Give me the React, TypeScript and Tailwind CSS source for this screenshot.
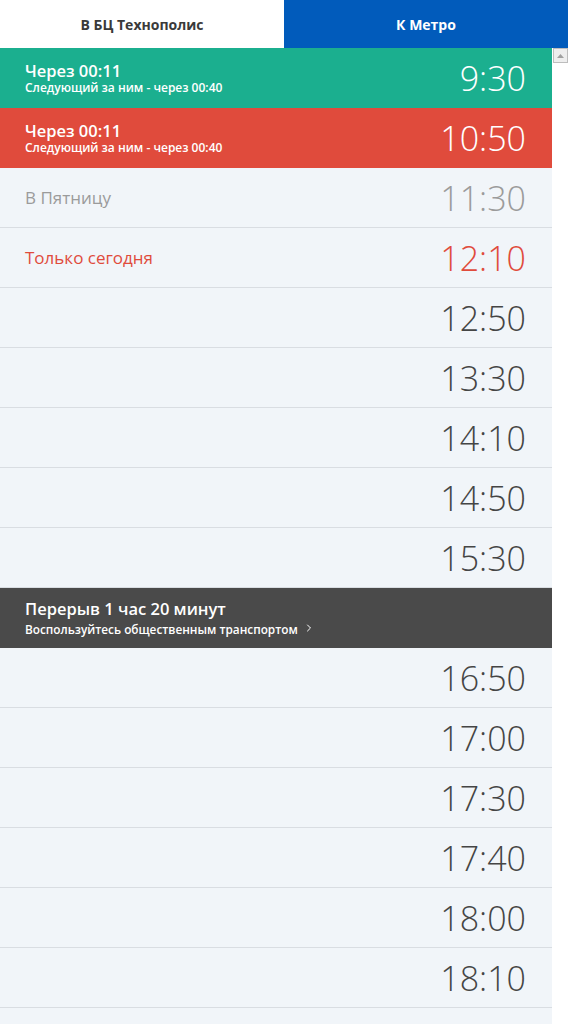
import { ChevronRight } from 'lucide-react'

type Row =
  | { kind: 'next'; tone: 'green' | 'red'; time: string }
  | { kind: 'time'; time: string; label?: string; tone?: 'gray' | 'red' }
  | { kind: 'break' }

const rows: Row[] = [
  { kind: 'next', tone: 'green', time: '9:30' },
  { kind: 'next', tone: 'red', time: '10:50' },
  { kind: 'time', time: '11:30', label: 'В Пятницу', tone: 'gray' },
  { kind: 'time', time: '12:10', label: 'Только сегодня', tone: 'red' },
  { kind: 'time', time: '12:50' },
  { kind: 'time', time: '13:30' },
  { kind: 'time', time: '14:10' },
  { kind: 'time', time: '14:50' },
  { kind: 'time', time: '15:30' },
  { kind: 'break' },
  { kind: 'time', time: '16:50' },
  { kind: 'time', time: '17:00' },
  { kind: 'time', time: '17:30' },
  { kind: 'time', time: '17:40' },
  { kind: 'time', time: '18:00' },
  { kind: 'time', time: '18:10' },
  { kind: 'time', time: '' },
]

const font = { fontFamily: '"Open Sans", Roboto, sans-serif' }

export default function App() {
  return (
    <div className="w-[568px] h-[1024px] overflow-hidden bg-white" style={font}>
      {/* Tabs */}
      <div className="flex h-12">
        <div className="w-[284px] flex items-center justify-center bg-white text-[14px] font-bold text-[#3a3a3a]">
          В БЦ Технополис
        </div>
        <div className="flex-1 flex items-center justify-center bg-[#015bbb] text-[14px] font-bold text-white">
          К Метро
        </div>
      </div>

      <div className="flex">
        {/* List */}
        <div className="w-[552px] flex flex-col bg-[#f1f5f9]">
          {rows.map((r, i) => {
            if (r.kind === 'next') {
              return (
                <div
                  key={i}
                  className={`h-[60px] flex items-center justify-between pl-[25px] pr-[26px] text-white ${
                    r.tone === 'green' ? 'bg-[#1baf8f]' : 'bg-[#e04b3c]'
                  }`}
                >
                  <div className="flex flex-col">
                    <span className="text-[16.5px] font-semibold leading-[18px]">Через 00:11</span>
                    <span className="text-[12px] font-semibold leading-[14px] mt-px">
                      Следующий за ним - через 00:40
                    </span>
                  </div>
                  <span className="text-[34px] font-light leading-none">{r.time}</span>
                </div>
              )
            }
            if (r.kind === 'break') {
              return (
                <div key={i} className="h-[60px] flex flex-col justify-center pl-[25px] bg-[#4a4a4a] text-white">
                  <span className="text-[16.5px] font-semibold leading-[20px]">Перерыв 1 час 20 минут</span>
                  <span className="flex items-center gap-[5px] text-[11.8px] font-semibold leading-[16px] mt-[2px]">
                    Воспользуйтесь общественным транспортом
                    <ChevronRight size={12} strokeWidth={2} className="-mt-[3px]" />
                  </span>
                </div>
              )
            }
            const labelColor = r.tone === 'red' ? 'text-[#e04b3c]' : 'text-[#9b9b9b]'
            const timeColor =
              r.tone === 'red' ? 'text-[#e04b3c]' : r.tone === 'gray' ? 'text-[#9b9b9b]' : 'text-[#454545]'
            return (
              <div
                key={i}
                className="h-[60px] flex items-center justify-between pl-[25px] pr-[26px] border-b border-[#d9dde2]"
              >
                <span className={`text-[17px] ${labelColor}`}>{r.label ?? ''}</span>
                <span className={`text-[34px] font-light leading-none ${timeColor}`}>{r.time}</span>
              </div>
            )
          })}
        </div>

        {/* Scrollbar */}
        <div className="flex-1 bg-white">
          <div className="w-[15px] h-[15px] ml-px bg-[#eeeeee] border border-[#bdbdbd] flex items-center justify-center">
            <svg width="7" height="4" viewBox="0 0 7 4">
              <path d="M0 4 L3.5 0 L7 4 Z" fill="#a0a0a0" />
            </svg>
          </div>
        </div>
      </div>
    </div>
  )
}
